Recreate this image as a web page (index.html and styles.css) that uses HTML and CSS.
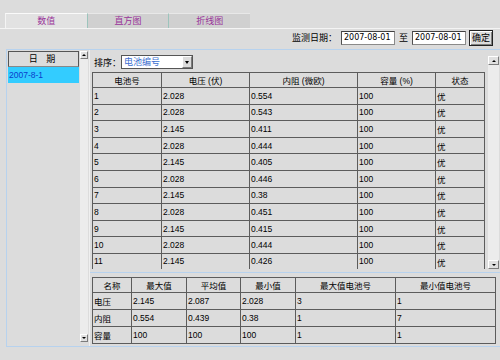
FILE: index.html
```html
<!DOCTYPE html>
<html lang="zh-CN">
<head>
    <meta charset="UTF-8">
    <title>电池监测</title>
    <link rel="stylesheet" href="styles.css">
</head>
<body>
    <div class="tabs">
        <div class="tab active">数值</div>
        <div class="tab">直方图</div>
        <div class="tab">折线图</div>
    </div>

    <div class="toolbar">
        <span class="label">监测日期：</span>
        <span class="field">2007-08-01</span>
        <span class="to">至</span>
        <span class="field">2007-08-01</span>
        <span class="ok">确定</span>
    </div>

    <div class="main">
        <div class="side">
            <div class="list">
                <div class="list-head">日 期</div>
                <div class="list-item">2007-8-1</div>
            </div>
            <div class="vscroll small">
                <span class="arrow up"></span>
                <span class="arrow down"></span>
            </div>
        </div>

        <div class="content">
            <div class="grid-area">
                <div class="grid-body">
                    <div class="sort">
                        <span>排序：</span>
                        <span class="select">
                            <span class="select-text">电池编号</span>
                            <span class="select-btn"></span>
                        </span>
                    </div>
                    <table class="grid">
                        <colgroup>
                            <col style="width:69px"><col style="width:88px"><col style="width:108px"><col style="width:78px"><col style="width:49px">
                        </colgroup>
                        <thead>
                            <tr><th>电池号</th><th>电压 (伏)</th><th>内阻 (微欧)</th><th>容量 (%)</th><th>状态</th></tr>
                        </thead>
                        <tbody id="rows"></tbody>
                    </table>
                </div>
                <div class="vscroll big">
                    <span class="arrow up"></span>
                    <span class="arrow down"></span>
                </div>
            </div>

            <table class="stats">
                <colgroup>
                    <col style="width:39px"><col style="width:55px"><col style="width:54px"><col style="width:55px"><col style="width:100px"><col style="width:100px">
                </colgroup>
                <thead>
                    <tr><th>名称</th><th>最大值</th><th>平均值</th><th>最小值</th><th>最大值电池号</th><th>最小值电池号</th></tr>
                </thead>
                <tbody>
                    <tr><td>电压</td><td>2.145</td><td>2.087</td><td>2.028</td><td>3</td><td>1</td></tr>
                    <tr><td>内阻</td><td>0.554</td><td>0.439</td><td>0.38</td><td>1</td><td>7</td></tr>
                    <tr><td>容量</td><td>100</td><td>100</td><td>100</td><td>1</td><td>1</td></tr>
                </tbody>
            </table>
        </div>
    </div>

    <script>
        const data = [
            ['2.028', '0.554'], ['2.028', '0.543'], ['2.145', '0.411'],
            ['2.028', '0.444'], ['2.145', '0.405'], ['2.028', '0.446'],
            ['2.145', '0.38'], ['2.028', '0.451'], ['2.145', '0.415'],
            ['2.028', '0.444'], ['2.145', '0.426']
        ];
        const rows = document.getElementById('rows');
        data.forEach(function(d, i) {
            const tr = document.createElement('tr');
            tr.innerHTML = '<td>' + (i + 1) + '</td><td>' + d[0] + '</td><td>' + d[1] + '</td><td>100</td><td>优</td>';
            rows.appendChild(tr);
        });
    </script>
</body>
</html>
```

FILE: styles.css
```css
body {
    margin: 0;
    width: 500px;
    height: 360px;
    overflow: hidden;
    background-color: #dcdcdc;
    font-family: "Liberation Sans", "Noto Sans CJK SC", sans-serif;
    font-size: 9px;
    color: #000;
}

/* tabs */
.tabs {
    display: flex;
    padding: 13px 0 0 5px;
    height: 15px;
    border-bottom: 1px solid #f4f4f4;
}

.tab {
    flex: 0 0 81.7px;
    box-sizing: border-box;
    height: 15px;
    line-height: 15px;
    text-align: center;
    color: #993399;
    background-color: #d0d0d0;
    border-left: 1px solid #9cc4bc;
    border-top: 1px solid #e8e8e8;
}

.tab.active {
    background-color: #e2e2e2;
    border-left: 1px solid #f4f4f4;
    border-top: 1px solid #fafafa;
}

/* date toolbar */
.toolbar {
    display: flex;
    justify-content: flex-end;
    align-items: flex-start;
    height: 18px;
    padding: 2px 7px 0 0;
}

.label {
    line-height: 14px;
    margin-right: 4px;
}

.field {
    box-sizing: border-box;
    width: 54px;
    height: 14px;
    line-height: 12px;
    padding-left: 2px;
    background-color: #fff;
    border: 1px solid #8a8a8a;
    border-top-color: #404040;
    border-left-color: #505050;
    font-family: "DejaVu Sans", sans-serif;
    font-size: 8px;
}

.to {
    line-height: 14px;
    margin: 0 4px;
}

.ok {
    box-sizing: border-box;
    width: 24px;
    height: 16px;
    margin: -1px 0 0 3px;
    line-height: 14px;
    text-align: center;
    border: 1px solid #222;
    box-shadow: inset 1px 1px #fff, inset -1px -1px #808080;
    background-color: #dcdcdc;
}

/* main panels */
.main {
    display: flex;
    margin-left: 6px;
    height: 296px;
    border-top: 1px solid #b7d2ee;
    border-bottom: 1px solid #b7d2ee;
}

.side {
    display: flex;
    box-sizing: border-box;
    width: 84px;
    padding: 1px 0 0 1px;
    border-left: 1px solid #b7d2ee;
    border-right: 1px solid #efefef;
}

.list {
    width: 71px;
    height: 291px;
}

.list-head {
    box-sizing: border-box;
    height: 16px;
    line-height: 14px;
    text-align: center;
    letter-spacing: 3px;
    border: 1px solid #555;
    border-bottom-color: #888;
}

.list-item {
    height: 16px;
    line-height: 16px;
    padding-left: 1px;
    background-color: #33ccff;
    color: #0a3ccc;
    font-size: 8.5px;
}

/* scrollbars */
.vscroll {
    display: flex;
    flex-direction: column;
    justify-content: space-between;
    background-color: #ececec;
}

.vscroll.small {
    width: 8px;
    height: 291px;
    margin-left: 1px;
}

.vscroll.big {
    width: 11px;
    height: 213px;
    margin: 6px 0 0 2px;
}

.arrow {
    display: flex;
    align-items: center;
    justify-content: center;
    box-sizing: border-box;
    height: 8px;
    background-color: #e0e0e0;
    border: 1px solid;
    border-color: #fff #7c7c7c #7c7c7c #fff;
}

.big .arrow {
    height: 9px;
}

.arrow::after {
    content: '';
    width: 0;
    height: 0;
    border-left: 2px solid transparent;
    border-right: 2px solid transparent;
}

.arrow.up::after {
    border-bottom: 2px solid #000;
}

.arrow.down::after {
    border-top: 2px solid #000;
}

/* data grid */
.content {
    flex: 1;
}

.grid-area {
    display: flex;
    height: 222px;
    border-bottom: 1px solid #b7d2ee;
}

.grid-body {
    width: 394px;
    height: 214px;
    margin: 5px 0 0 2px;
    overflow: hidden;
}

.sort {
    display: flex;
    align-items: center;
    height: 14px;
    padding-left: 2px;
    margin-bottom: 3px;
}

.select {
    display: flex;
    box-sizing: border-box;
    width: 72px;
    height: 14px;
    background-color: #fff;
    border: 1px solid #555;
}

.select-text {
    flex: 1;
    line-height: 12px;
    padding-left: 2px;
    color: #3b6fd0;
}

.select-btn {
    display: flex;
    align-items: center;
    justify-content: center;
    box-sizing: border-box;
    width: 10px;
    background-color: #dcdcdc;
    border: 1px solid;
    border-color: #fff #7c7c7c #7c7c7c #fff;
}

.select-btn::after {
    content: '';
    border-left: 2.5px solid transparent;
    border-right: 2.5px solid transparent;
    border-top: 3px solid #000;
}

table {
    border-collapse: collapse;
    table-layout: fixed;
    font-size: 8.5px;
}

th, td {
    border: 1px solid #5c5c5c;
    padding: 0 1px;
    overflow: hidden;
    white-space: nowrap;
}

th {
    font-weight: normal;
    text-align: center;
}

td {
    text-align: left;
}

.grid {
    width: 392px;
}

.grid th {
    height: 14px;
}

.grid td {
    height: 15.6px;
}

/* last visible row runs under the scroll edge */
.grid tbody tr:last-child td {
    border-bottom: none;
    height: 17px;
    vertical-align: top;
    padding-top: 2px;
}

.stats {
    width: 403px;
    margin: 4px 0 0 2px;
}

.stats th {
    height: 14px;
}

.stats td {
    height: 16px;
}
```
